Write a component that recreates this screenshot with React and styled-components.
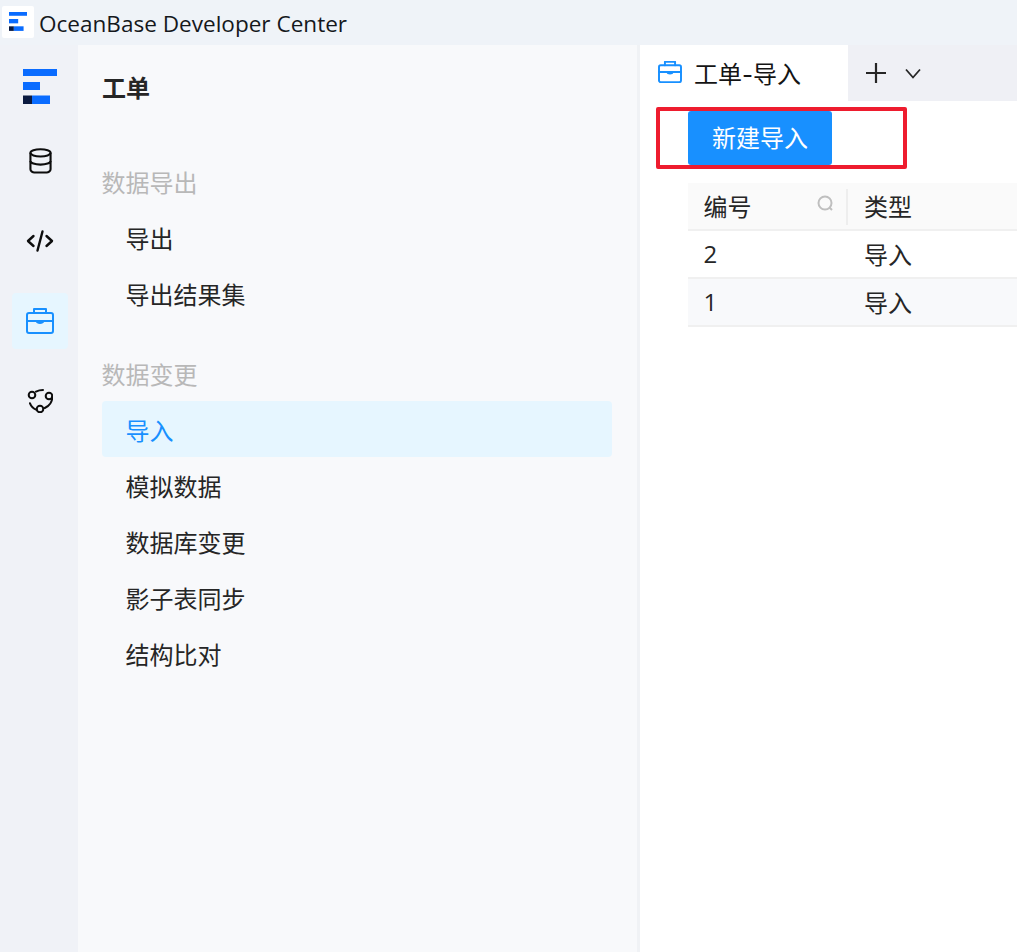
import React from "react";
import styled, { createGlobalStyle } from "styled-components";

const Global = createGlobalStyle`
  html, body { margin: 0; padding: 0; background: #fff; }
  * { box-sizing: border-box; }
`;
const CJK = `"Open Sans", "Noto Sans CJK SC", sans-serif`;

const Page = styled.div`
  width: 1017px; height: 952px; overflow: hidden;
  display: flex; flex-direction: column; font-family: ${CJK};
`;
const TitleBar = styled.div`
  height: 45px; flex: none; background: #eff3f8;
  display: flex; align-items: flex-start; padding: 6px 0 0 2px;
`;
const AppIcon = styled.div`
  width: 32px; height: 32px; background: #fff; border-radius: 2px;
  display: flex; align-items: center; justify-content: center; flex: none;
`;
const AppName = styled.div`
  font-family: "Open Sans", sans-serif; font-size: 22.55px; color: #15181c; margin-left: 5px; line-height: 36px; white-space: nowrap;
`;
const Body = styled.div`flex: 1; display: flex; min-height: 0;`;
const Rail = styled.nav`
  width: 78px; flex: none; background: #f0f2f7;
  display: flex; flex-direction: column; align-items: center; padding: 24px 0 0 2px;
`;
const RailLogo = styled.div`height: 36px; margin-bottom: 28px; display: flex; align-items: center;`;
const RailItem = styled.div`
  width: 56px; height: 56px; margin-bottom: 24px; border-radius: 4px; display: flex; align-items: center; justify-content: center;
  background: ${p => (p.$active ? "#e6f6ff" : "transparent")};
  color: ${p => (p.$active ? "#1890ff" : "#0d0d0d")};
`;
const Panel = styled.aside`
  width: 559px; flex: none; background: #f8f9fb; padding: 25px 25px 0 24px;
`;
const PanelTitle = styled.h1`
  margin: 0 0 59px; font-size: 24px; line-height: 36px; font-weight: 700; color: #262626;
`;
const Section = styled.div`margin-bottom: 36px;`;
const SectionLabel = styled.div`
  font-size: 24px; line-height: 36px; color: #b8b8b8; margin-bottom: 8px; text-indent: -0.5px;
`;
const MenuItem = styled.div`
  height: 56px; padding-left: 23.5px; border-radius: 4px; display: flex; align-items: center;
  font-size: 24px; color: ${p => (p.$active ? "#1890ff" : "#262626")};
  background: ${p => (p.$active ? "#e6f6ff" : "transparent")};
`;
const Divider = styled.div`width: 3px; flex: none; background: #f0f2f5;`;
const Main = styled.main`flex: 1; min-width: 0; background: #fff; display: flex; flex-direction: column;`;
const TabBar = styled.div`height: 56px; flex: none; display: flex; background: #eff0f5;`;
const Tab = styled.div`
  width: 208px; background: #fff; display: flex; align-items: center; padding: 0 0 2px 18px; gap: 12px;
  font-family: "Inter", "Noto Sans CJK SC", sans-serif; font-size: 24px; color: #141414;
`;
const TabIcon = styled.span`color: #1890ff; display: flex;`;
const TabActions = styled.div`display: flex; align-items: center; padding-left: 17px; gap: 18px; color: #262626;`;
const Toolbar = styled.div`position: relative; height: 82px; padding: 10px 0 0 48px;`;
const PrimaryButton = styled.button`
  width: 144px; height: 54px; border: none; border-radius: 3px; background: #1890ff; color: #fff;
  font: 400 24px ${CJK}; padding: 0 0 4px; display: block;
`;
const Highlight = styled.div`
  position: absolute; left: 16px; top: 6px; width: 251px; height: 62px;
  border: 4px solid #ee1c2e; border-radius: 2px; pointer-events: none;
`;
const Table = styled.div`margin-left: 48px; font-size: 24px; color: #262626;`;
const HeadRow = styled.div`
  height: 48px; display: flex; align-items: center; background: #fafafa; border-bottom: 2px solid #f0f0f0;
`;
const Row = styled.div`
  height: 48px; display: flex; align-items: center; border-bottom: 2px solid #f0f0f0; padding-bottom: 2px;
  background: ${p => (p.$stripe ? "#f8f9fb" : "#fff")};
`;
const NumCell = styled.div`
  width: 160px; flex: none; padding-left: 15.5px; display: flex; align-items: center; justify-content: space-between; height: 36px;
`;
const HeadNum = styled(NumCell)`
  padding: 0 13px 2px 15.5px; border-right: 2px solid #eeeeee; margin-top: 1px;
`;
const TypeCell = styled.div`padding-left: 16px; white-space: nowrap;`;
const HeadType = styled(TypeCell)`padding-bottom: 2px;`;
const SearchIcon = styled.svg`margin-bottom: 6px;`;

const Logo = ({ scale = 1 }) => (
  <svg width={34 * scale} height={36 * scale} viewBox="0 0 34 36">
    <rect x="0" y="0" width="34" height="7" fill="#0a6cff" />
    <rect x="0" y="13" width="17" height="8" fill="#0a6cff" />
    <rect x="0" y="26.500" width="9" height="8.500" fill="#0b1a40" />
    <rect x="9" y="26.500" width="18" height="8.500" fill="#0a6cff" />
  </svg>
);
const Briefcase = ({ width = 28, height = 26, stroke = 2 }) => (
  <svg width={width} height={height} viewBox="0 0 28 26" fill="none" stroke="currentColor" strokeWidth={stroke} strokeLinejoin="round" strokeLinecap="round">
    <rect x="1" y="5" width="26" height="20" rx="2" />
    <path d="M8 5V1h12v4" />
    <path d="M1 13h9M18 13h9" />
    <path d="M10.500 13c1 2.600 6 2.600 7 0z" fill="currentColor" />
  </svg>
);

export default function App() {
  return (
    <Page>
      <Global />
      <TitleBar>
        <AppIcon><Logo scale={0.54} /></AppIcon>
        <AppName>OceanBase Developer Center</AppName>
      </TitleBar>
      <Body>
        <Rail>
          <RailLogo><Logo /></RailLogo>
          <RailItem>
            <svg width="23" height="26" viewBox="0 0 24 27" fill="none" stroke="currentColor" strokeWidth="2.200">
              <ellipse cx="12" cy="5" rx="10.500" ry="3.800" />
              <path d="M1.500 5v17c0 2.200 2.500 3.500 4 3.500h13c1.500 0 4-1.300 4-3.500V5" />
              <path d="M1.500 13.500c0 2.200 4.700 3.800 10.500 3.800s10.500-1.600 10.500-3.800" />
            </svg>
          </RailItem>
          <RailItem>
            <svg width="28" height="22" viewBox="0 0 28 22" fill="none" stroke="currentColor" strokeWidth="2.400" strokeLinecap="round" strokeLinejoin="round">
              <path d="M7.500 6 2 11l5.500 5M20.500 6 26 11l-5.500 5M16.500 1.500 11.500 20.500" />
            </svg>
          </RailItem>
          <RailItem $active><Briefcase /></RailItem>
          <RailItem>
            <svg width="26" height="24" viewBox="0 0 26 24" fill="none" stroke="currentColor" strokeWidth="2" strokeLinecap="round">
              <circle cx="5" cy="6" r="3.300" />
              <circle cx="22" cy="7" r="3.300" />
              <circle cx="13" cy="20" r="3.300" />
              <path d="M9 2.600C11 1.600 13.500 1 16 1M25.300 7.500c.2 5-3 9.500-7.500 11.500M3 14.300C4 17 6.200 19.500 9.500 20.800" />
            </svg>
          </RailItem>
        </Rail>
        <Panel>
          <PanelTitle>工单</PanelTitle>
          <Section>
            <SectionLabel>数据导出</SectionLabel>
            <MenuItem>导出</MenuItem>
            <MenuItem>导出结果集</MenuItem>
          </Section>
          <Section>
            <SectionLabel>数据变更</SectionLabel>
            <MenuItem $active>导入</MenuItem>
            <MenuItem>模拟数据</MenuItem>
            <MenuItem>数据库变更</MenuItem>
            <MenuItem>影子表同步</MenuItem>
            <MenuItem>结构比对</MenuItem>
          </Section>
        </Panel>
        <Divider />
        <Main>
          <TabBar>
            <Tab>
              <TabIcon><Briefcase width={24} height={22} stroke={2.300} /></TabIcon>
              工单-导入
            </Tab>
            <TabActions>
              <svg width="22" height="22" viewBox="0 0 22 22" stroke="currentColor" strokeWidth="2.200"><path d="M11 1v20M1 11h20" /></svg>
              <svg width="16" height="11" viewBox="0 0 16 11" fill="none" stroke="currentColor" strokeWidth="1.800"><path d="M1 1.500 8 9.500l7-8" /></svg>
            </TabActions>
          </TabBar>
          <Toolbar>
            <PrimaryButton>新建导入</PrimaryButton>
            <Highlight />
          </Toolbar>
          <Table>
            <HeadRow>
              <HeadNum>
                编号
                <SearchIcon width="16" height="16" viewBox="0 0 16 16" fill="none" stroke="#bfbfbf" strokeWidth="2">
                  <circle cx="8" cy="8" r="6.500" />
                  <path d="M12.500 12.500 15 15" />
                </SearchIcon>
              </HeadNum>
              <HeadType>类型</HeadType>
            </HeadRow>
            <Row><NumCell>2</NumCell><TypeCell>导入</TypeCell></Row>
            <Row $stripe><NumCell>1</NumCell><TypeCell>导入</TypeCell></Row>
          </Table>
        </Main>
      </Body>
    </Page>
  );
}
